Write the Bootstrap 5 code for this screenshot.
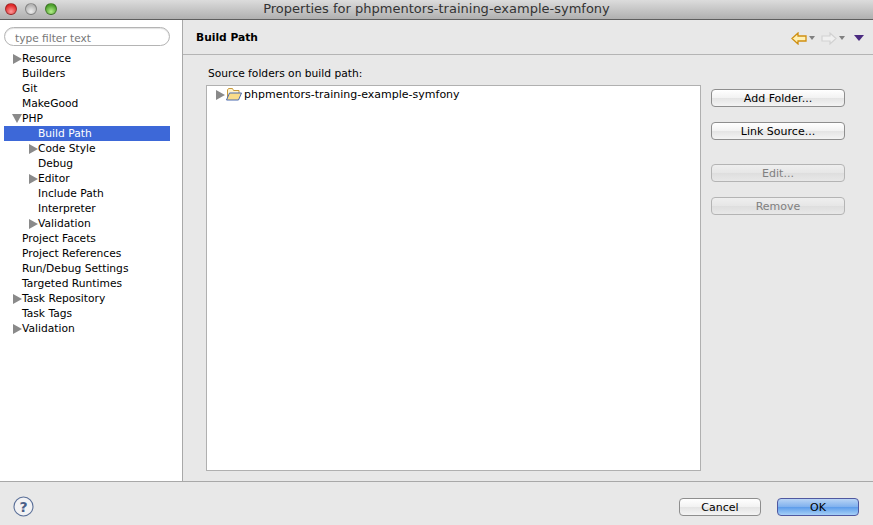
<!DOCTYPE html>
<html lang="en">
<head>
<meta charset="utf-8">
<title>Properties</title>
<link href="https://cdn.jsdelivr.net/npm/bootstrap@5.3.0/dist/css/bootstrap.min.css" rel="stylesheet">
<style>
html,body{height:525px;overflow:hidden;}
body{font-family:"DejaVu Sans","Liberation Sans",sans-serif;font-size:10.7px;color:#000;background:#e8e8e8;}
.win-title{height:20px;background:linear-gradient(#dcdcdc,#b0b0b0);border-bottom:1px solid #5e5e5e;font-size:13px;color:#333;line-height:18px;padding-left:5px;position:relative;}
.win-title span.ttl{position:absolute;left:0;right:0;top:0;text-align:center;}
.light{width:12px;height:12px;border-radius:50%;border:1px solid rgba(0,0,0,.3);margin-top:3px;}
.l-red{background:radial-gradient(circle at 50% 75%,#ff9a9a,#e02a2a 70%);}
.l-grey{background:radial-gradient(circle at 50% 75%,#eee,#b5b5b5 70%);}
.l-green{background:radial-gradient(circle at 50% 75%,#b4f08a,#4da02c 70%);}
.main-area{height:461px;}
.side-pane{width:183px;background:#fff;border-right:1px solid #a8a8a8;padding:7px 12px 0 4px;}
.filter-box{height:19px;width:166px;border:1px solid #b4b4b4;border-radius:10px;color:#777;line-height:20px;padding-left:10px;font-size:10.6px;box-shadow:inset 0 1px 1px rgba(0,0,0,.12);margin-bottom:5px;}
.tree-row{height:15px;line-height:15px;width:166px;white-space:nowrap;display:flex;align-items:center;}
.tree-row.sel{background:#3d68d8;color:#fff;}
.lvl0{padding-left:18px;}
.lvl1{padding-left:34px;}
.arr{width:0;height:0;display:inline-block;}
.arr-r{border-left:9px solid #8a8a8a;border-top:5px solid transparent;border-bottom:5px solid transparent;}
.arr-d{border-top:9px solid #8a8a8a;border-left:5px solid transparent;border-right:5px solid transparent;}
.arr-slot{width:10px;margin-left:-10px;display:flex;flex:none;justify-content:center;}
.content-pane{background:#e8e8e8;min-width:0;}
.pane-head{height:35px;border-bottom:1px solid #b4b4b4;padding:1px 9px 0 13px;display:flex;align-items:center;justify-content:space-between;}
.pane-title{font-weight:700;font-size:10.7px;padding-top:2px;}
.tools{margin-top:1px;}
.tools .gap-a{margin-left:2px;}
.tools .gap-b{margin-left:6px;}
.tools .gap-c{margin-left:9px;}
.pane-body{padding:12px 28px 0 23px;gap:10px;}
.src-label{height:18px;line-height:14px;padding-left:2px;}
.tree-box{width:495px;height:386px;background:#fff;border:1px solid #b0b0b0;padding:1px 9px;font-size:11px;}
.tree-line{height:15px;}
.tree-line svg{margin:0 2px 0 1px;}
.tree-label{padding-top:2px;}
.btn-col{width:134px;padding-top:22px;}
.eclipse-btn{display:block;width:134px;height:18px;padding:1px 0 0;font-size:11px;line-height:16px;color:#000;border:1px solid #8e8e8e;border-radius:4px;background:linear-gradient(#fff,#f2f2f2 50%,#e4e4e4 51%,#f4f4f4);}
.eclipse-btn:disabled{color:#808080;border-color:#b4b4b4;background:linear-gradient(#efefef,#e6e6e6 50%,#dedede 51%,#e8e8e8);opacity:1;}
.space-a{margin-bottom:15px;}
.space-b{margin-bottom:24px;}
.foot-bar{height:44px;border-top:1px solid #a8a8a8;padding:16px 14px 0 13px;background:#e8e8e8;}
.foot-bar .eclipse-btn{width:82px;}
.help-icon{margin-top:-2px;}
.foot-btns{gap:16px;}
.ok-btn{background:linear-gradient(#b9d4f5,#7fb0ee 50%,#5d9cea 51%,#a6d0f7) !important;border-color:#5058a0 !important;}
.tool-sm{width:0;height:0;border-top:4px solid #808080;border-left:3px solid transparent;border-right:3px solid transparent;}
</style>
</head>
<body>
<div class="win-title d-flex gap-2">
  <span class="light l-red"></span><span class="light l-grey"></span><span class="light l-green"></span>
  <span class="ttl">Properties for phpmentors-training-example-symfony</span>
</div>
<div class="main-area d-flex">
  <div class="side-pane flex-shrink-0">
    <div class="filter-box">type filter text</div>
    <div class="tree-row lvl0"><span class="arr-slot"><span class="arr arr-r"></span></span><span>Resource</span></div>
    <div class="tree-row lvl0"><span>Builders</span></div>
    <div class="tree-row lvl0"><span>Git</span></div>
    <div class="tree-row lvl0"><span>MakeGood</span></div>
    <div class="tree-row lvl0"><span class="arr-slot"><span class="arr arr-d"></span></span><span>PHP</span></div>
    <div class="tree-row lvl1 sel"><span>Build Path</span></div>
    <div class="tree-row lvl1"><span class="arr-slot"><span class="arr arr-r"></span></span><span>Code Style</span></div>
    <div class="tree-row lvl1"><span>Debug</span></div>
    <div class="tree-row lvl1"><span class="arr-slot"><span class="arr arr-r"></span></span><span>Editor</span></div>
    <div class="tree-row lvl1"><span>Include Path</span></div>
    <div class="tree-row lvl1"><span>Interpreter</span></div>
    <div class="tree-row lvl1"><span class="arr-slot"><span class="arr arr-r"></span></span><span>Validation</span></div>
    <div class="tree-row lvl0"><span>Project Facets</span></div>
    <div class="tree-row lvl0"><span>Project References</span></div>
    <div class="tree-row lvl0"><span>Run/Debug Settings</span></div>
    <div class="tree-row lvl0"><span>Targeted Runtimes</span></div>
    <div class="tree-row lvl0"><span class="arr-slot"><span class="arr arr-r"></span></span><span>Task Repository</span></div>
    <div class="tree-row lvl0"><span>Task Tags</span></div>
    <div class="tree-row lvl0"><span class="arr-slot"><span class="arr arr-r"></span></span><span>Validation</span></div>
  </div>
  <div class="content-pane flex-grow-1">
    <div class="pane-head">
      <span class="pane-title">Build Path</span>
      <span class="tools d-flex align-items-center">
        <svg width="16" height="13" viewBox="0 0 16 13"><path d="M1 6.500 7 1v3h8v5H7v3z" fill="#fff0b4" stroke="#cf8f10" stroke-width="1.300"/></svg>
        <span class="tool-sm gap-a"></span>
        <svg class="gap-b" width="16" height="13" viewBox="0 0 16 13"><path d="M15 6.500 9 1v3H1v5h8v3z" fill="#f0f0f0" stroke="#d2d2d2" stroke-width="1.200"/></svg>
        <span class="tool-sm gap-a"></span>
        <svg class="gap-c" width="10" height="6" viewBox="0 0 10 6"><path d="M0 0h10L5 6z" fill="#4a2a80"/></svg>
      </span>
    </div>
    <div class="pane-body d-flex">
      <div>
        <div class="src-label">Source folders on build path:</div>
        <div class="tree-box">
          <span class="tree-line d-flex align-items-center">
            <span class="arr arr-r"></span>
            <svg width="16" height="13" viewBox="0 0 16 13"><path d="M1.500 11V2L2.500 .5h4l1 2h5.500V5" fill="#fff4cf" stroke="#c99a3a"/><path d="M.5 12 3.500 5H15.500L12.500 12z" fill="#f9dc8a" stroke="#4a6ab0"/></svg>
            <span class="tree-label">phpmentors-training-example-symfony</span>
          </span>
        </div>
      </div>
      <div class="btn-col d-flex flex-column">
        <button class="eclipse-btn space-a">Add Folder...</button>
        <button class="eclipse-btn space-b">Link Source...</button>
        <button class="eclipse-btn space-a" disabled>Edit...</button>
        <button class="eclipse-btn" disabled>Remove</button>
      </div>
    </div>
  </div>
</div>
<div class="foot-bar d-flex justify-content-between">
  <svg class="help-icon" width="21" height="21" viewBox="0 0 21 21"><circle cx="10.500" cy="10.500" r="9.500" fill="#f2f2f4" stroke="#5a6f98" stroke-width="1.100"/><text x="10.500" y="15.500" font-family="DejaVu Sans" font-size="14" font-weight="700" fill="#4a5f88" text-anchor="middle">?</text></svg>
  <div class="foot-btns d-flex">
    <button class="eclipse-btn">Cancel</button>
    <button class="eclipse-btn ok-btn">OK</button>
  </div>
</div>
</body>
</html>
